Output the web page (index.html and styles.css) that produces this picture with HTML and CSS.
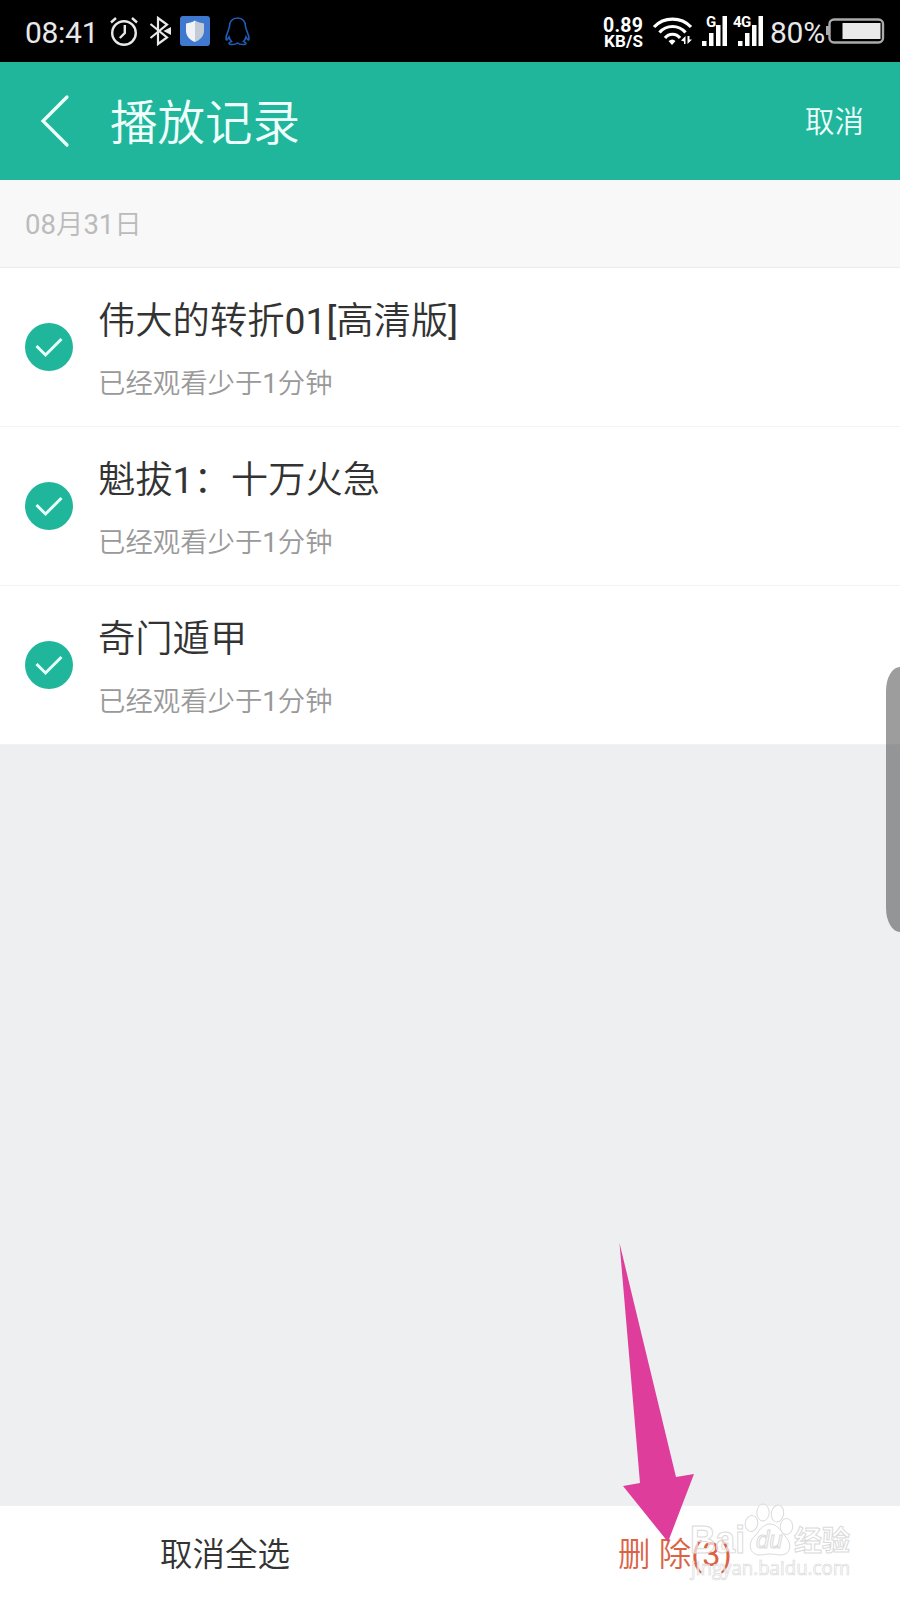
FILE: index.html
```html
<!DOCTYPE html>
<html lang="zh-CN">
<head>
<meta charset="utf-8">
<title>播放记录</title>
<link rel="stylesheet" href="styles.css">
</head>

<body>
	<div class="status">
		<span class="time">08:41</span>
		<svg class="alarm" width="28" height="30" viewBox="0 0 28 30">
			<g fill="none" stroke="#e8e8e8" stroke-width="2.4">
				<circle cx="14" cy="17" r="11.8"/>
				<path d="M14.8 9v8l-5 5M1 6.5l5-4.500M22 2l5 4.500"/>
			</g>
		</svg>
		<svg class="bluetooth" width="23" height="30" viewBox="0 0 23 30">
			<path d="M1.500 8L18 21.500 9 28V2l9 6.500L1.500 22" fill="none" stroke="#e8e8e8" stroke-width="2.200"/>
			<path d="M14.500 15l7.500-4v8z" fill="#e8e8e8"/>
		</svg>
		<svg class="guard" width="30" height="30" viewBox="0 0 30 30">
			<rect width="30" height="30" rx="3" fill="#3f78cf"/>
			<path d="M15 4.500c3 2 6 2.500 9 3v7c0 6-4 9.500-9 11.500z" fill="#c3cbd6"/>
			<path d="M15 4.500c-3 2-6 2.500-9 3v7c0 6 4 9.500 9 11.500z" fill="#f0f2f5"/>
		</svg>
		<svg class="qq" width="25" height="29" viewBox="0 0 25 29">
			<path d="M12.500 1C7 1 4.500 5 4.500 9c0 4-3.700 8-3.500 13 .2 1.500 1.500 1 3-2 .5 2 1.200 3.200 2.500 4.500-1.500.5-2.500 1-2.500 2 0 1.500 6 1.500 8.500-.5 2.500 2 8.500 2 8.500.5 0-1-1-1.500-2.500-2C19.800 23.200 20.500 22 21 20c1.500 3 2.800 3.500 3 2 .2-5-3.500-9-3.500-13 0-4-2.500-8-8-8z" fill="none" stroke="#1f5cb8" stroke-width="1.600"/>
		</svg>

		<svg class="speed" width="42" height="36" viewBox="0 0 42 36">
			<text x="1" y="16" font-size="19.500" textLength="40">0.89</text>
			<text x="2" y="31" font-size="17" textLength="39">KB/S</text>
		</svg>
		<svg class="wifi" width="40" height="28" viewBox="0 0 40 28">
			<g fill="none" stroke="#fff" stroke-width="3.200">
				<path d="M1 10C11-.5 28-.5 38 10"/>
				<path d="M6.500 15.500c7-8 19-8 26 0"/>
				<path d="M12 21c4-5 11-5 15 0"/>
			</g>
			<path d="M15.500 24q4-3 7 0l-3.500 4z" fill="#fff"/>
			<path d="M32.500 19v8H31v-2.500L28 23.500zM34.500 19v8l4.500-4.500h-2.500V19z" fill="#fff"/>
		</svg>
		<svg class="signal" width="27" height="30" viewBox="0 0 27 30">
			<path d="M1 25h4.500v5H1zM8 17h4.500v13H8zM15 9h4.500v21H15zM21.500 0H26v30h-4.500z" fill="#fff"/>
			<text x="5" y="11">G</text>
		</svg>
		<svg class="signal signal-4g" width="31" height="30" viewBox="-4 0 31 30">
			<path d="M1 25h4.500v5H1zM8 17h4.500v13H8zM15 9h4.500v21H15zM21.500 0H26v30h-4.500z" fill="#fff"/>
			<text x="-4" y="11">4G</text>
		</svg>
		<span class="percent">80%</span>
		<svg class="battery" width="59" height="26" viewBox="0 0 59 26">
			<path d="M3 8H0v9h3z" fill="#aaa"/>
			<rect x="3.500" y="1.500" width="53.500" height="23" rx="4.500" fill="none" stroke="#aaa" stroke-width="2.400"/>
			<rect x="16.500" y="5" width="38" height="16" fill="#e9e9e9"/>
		</svg>
	</div>

	<div class="header">
		<svg class="back" width="28" height="52" viewBox="0 0 28 52">
			<path d="M26 2L2 26l24 24" fill="none" stroke="#effffb" stroke-width="3.200" stroke-linecap="round"/>
		</svg>
		<h1>播放记录</h1>
		<span class="cancel">取消</span>
	</div>

	<div class="date">08月31日</div>
	<ul class="list">
		<li>
			<svg class="check" width="48" height="48" viewBox="0 0 48 48">
				<circle cx="24" cy="24" r="24"/>
				<path d="M11.500 23l9 9 16-16"/>
			</svg>
			<div>
				<h2>伟大的转折01[高清版]</h2>
				<p>已经观看少于1分钟</p>
			</div>
		</li>
		<li>
			<svg class="check" width="48" height="48" viewBox="0 0 48 48">
				<circle cx="24" cy="24" r="24"/>
				<path d="M11.500 23l9 9 16-16"/>
			</svg>
			<div>
				<h2>魁拔1：十万火急</h2>
				<p>已经观看少于1分钟</p>
			</div>
		</li>
		<li>
			<svg class="check" width="48" height="48" viewBox="0 0 48 48">
				<circle cx="24" cy="24" r="24"/>
				<path d="M11.500 23l9 9 16-16"/>
			</svg>
			<div>
				<h2>奇门遁甲</h2>
				<p>已经观看少于1分钟</p>
			</div>
		</li>
	</ul>

	<div class="footer">
		<span>取消全选</span>
		<span class="delete">删 除(3)</span>
	</div>

	<div class="handle"></div>

	<svg class="arrow" width="76" height="300" viewBox="0 0 76 300">
		<path d="M.5 0L57 234l18-3-26 68L4 243l17-3z" fill="#df3d9b"/>
	</svg>

	<svg class="watermark" width="170" height="80" viewBox="0 0 170 80">
		<text class="brand" x="1" y="50" textLength="55" lengthAdjust="spacingAndGlyphs">Bai</text>
		<g class="paw">
			<ellipse cx="62.500" cy="20.500" rx="6.200" ry="8" transform="rotate(10 62.500 20.500)"/>
			<ellipse cx="74" cy="9.500" rx="6.200" ry="8.500"/>
			<ellipse cx="88.500" cy="10.500" rx="6.200" ry="8.500" transform="rotate(10 88.500 10.500)"/>
			<ellipse cx="97.500" cy="23.500" rx="6.200" ry="8"/>
			<path d="M81 21c-8 0-11 8-16 13-6 6-5 17 5 18 5 0 7-1 11-1s7 1 12 1c9-1 10-11 4-18-5-5-8-13-16-13z"/>
		</g>
		<text class="du" x="67" y="45">du</text>
		<text class="brand cn" x="105" y="48">经验</text>
		<text class="site" x="2" y="72" textLength="159" lengthAdjust="spacingAndGlyphs">jingyan.baidu.com</text>
	</svg>
</body>
</html>
```
FILE: styles.css
```css
* {
	box-sizing: border-box;
	margin: 0;
	padding: 0;
}
body {
	position: relative;
	display: flex;
	flex-direction: column;
	width: 900px;
	height: 1600px;
	overflow: hidden;
	background: #edeff0;
	font-family: Roboto, "Noto Sans CJK SC DemiLight", "Noto Sans CJK SC", sans-serif;
	color: #333;
}
svg {
	display: block;
	flex: none;
	overflow: visible;
}

/* 状态栏 */
.status {
	display: flex;
	align-items: flex-start;
	height: 62px;
	padding: 16px 15px 0 25px;
	background: #000;
	color: #e8e8e8;
}
.time,
.percent {
	font-size: 30px;
	line-height: 34px;
}
.time {
	width: 85px;
	letter-spacing: -0.3px;
}
.bluetooth {
	margin-left: 11px;
}
.guard {
	margin-left: 8px;
}
.qq {
	margin: 1px 0 0 15px;
}
.speed {
	margin-left: auto;
}
.speed text {
	font-weight: 700;
	fill: #fff;
}
.wifi {
	margin: 1px 0 0 9px;
}
.signal {
	margin-left: 8px;
}
.signal-4g {
	margin-left: 5px;
}
.signal text {
	font-size: 15px;
	font-weight: 700;
	letter-spacing: -0.5px;
	fill: #fff;
}
.percent {
	margin-left: 6px;
	letter-spacing: -0.2px;
}
.battery {
	margin: 2px 0 0 1px;
}

/* 标题栏 */
.header {
	display: flex;
	align-items: center;
	height: 118px;
	padding: 0 36px 0 41px;
	background: #20b69b;
	color: #effffb;
}
.header h1 {
	margin-left: 41px;
	padding-bottom: 4px;
	font-size: 47.5px;
	font-weight: 400;
}
.cancel {
	margin-left: auto;
	padding-bottom: 5px;
	font-size: 29.5px;
}

/* 记录列表 */
.date {
	height: 88px;
	padding-left: 25px;
	border-bottom: 1px solid #ececec;
	background: #f8f8f8;
	font-size: 27.5px;
	line-height: 90px;
	color: #bbb;
}
.list {
	list-style: none;
}
.list li {
	display: flex;
	height: 159px;
	padding: 0 25px;
	border-bottom: 1px solid #f3f3f3;
	background: #fff;
}
.check {
	margin: 55px 25px 0 0;
}
.check circle {
	fill: #20b69b;
}
.check path {
	fill: none;
	stroke: #e6fff9;
	stroke-width: 3;
}
.list h2 {
	margin-top: 25px;
	font-size: 37.3px;
	font-weight: 400;
	line-height: 56px;
}
.list p {
	margin-top: 15px;
	font-size: 27.4px;
	line-height: 40px;
	color: #999;
}

/* 底部操作栏 */
.footer {
	display: flex;
	height: 94px;
	margin-top: auto;
	background: #fff;
	font-size: 32.5px;
	line-height: 98px;
	text-align: center;
}
.footer span {
	flex: 1;
}
.footer .delete {
	color: #dc6245;
}

/* 右侧悬浮把手 */
.handle {
	position: absolute;
	top: 667px;
	right: -14px;
	width: 28px;
	height: 265px;
	border-radius: 14px / 24px;
	background: rgba(60, 60, 60, 0.5);
}

.arrow {
	position: absolute;
	top: 1243px;
	left: 619px;
}

/* 水印 */
.watermark {
	position: absolute;
	top: 1503px;
	left: 689px;
}
.watermark text,
.paw {
	fill: rgba(255, 255, 255, 0.65);
	stroke: #dadada;
	stroke-width: 1;
}
.watermark .brand {
	font-family: "Liberation Sans", sans-serif;
	font-size: 38px;
	font-weight: 700;
}
.watermark .cn {
	font-family: "Noto Sans CJK SC", sans-serif;
	font-size: 28px;
}
.watermark .du {
	font-family: "Liberation Sans", sans-serif;
	font-size: 24px;
	font-style: italic;
}
.watermark .site {
	font-family: "Open Sans", sans-serif;
	font-size: 20px;
	stroke-width: 0.7;
}
```
